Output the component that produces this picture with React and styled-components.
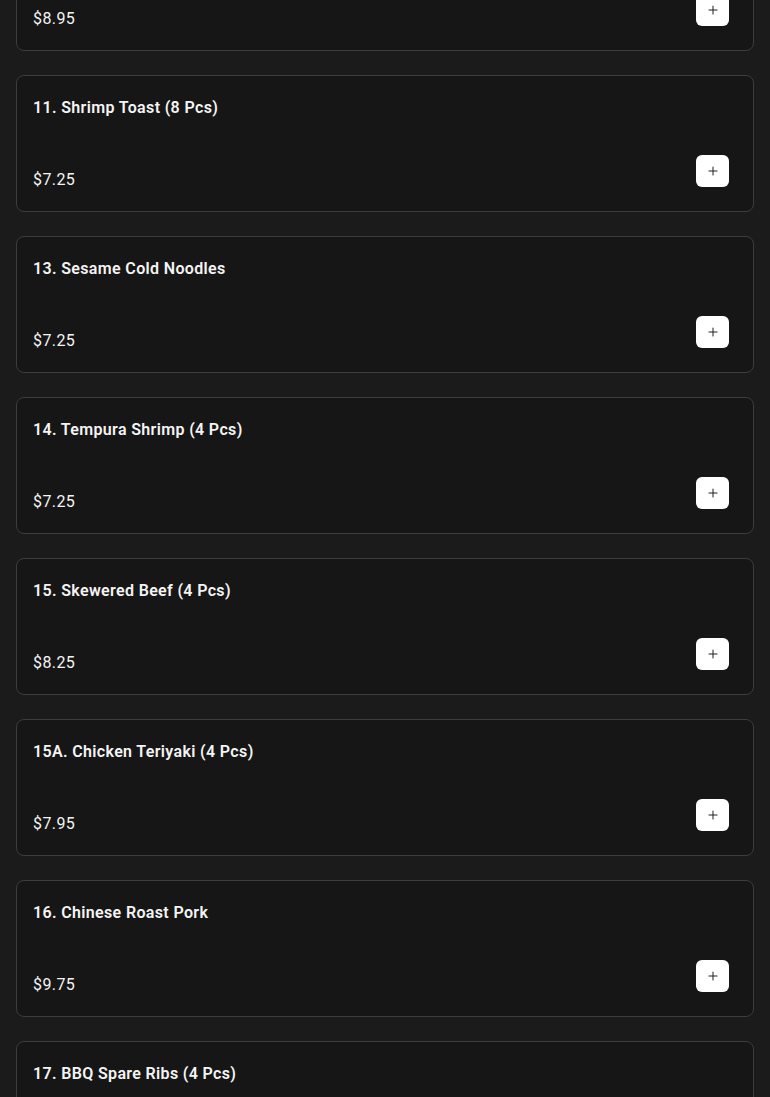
import styled, { createGlobalStyle } from "styled-components";
import { Plus } from "lucide-react";

const Global = createGlobalStyle`
  html, body {
    margin: 0;
    background: #1b1b1b;
    font-family: Roboto, "Liberation Sans", sans-serif;
    color: #f4f4f4;
  }
`;

const Page = styled.main`
  padding: 0 16px 40px;
  overflow: hidden;
`;

const List = styled.div`
  display: flex;
  flex-direction: column;
  gap: 24px;
  margin-top: -86px;
`;

const Card = styled.div`
  background: #161616;
  border: 1px solid #3d3d3d;
  border-radius: 8px;
  padding: 20px 16px 19px;
  display: flex;
  flex-direction: column;
`;

const Title = styled.h3`
  margin: 0;
  font-size: 16px;
  line-height: 24px;
  font-weight: 600;
  letter-spacing: 0.35px;
`;

const Footer = styled.div`
  margin-top: 35px;
  display: flex;
  justify-content: space-between;
  align-items: flex-end;
`;

const Price = styled.span`
  font-size: 16px;
  line-height: 24px;
  font-weight: 400;
  letter-spacing: 0.4px;
`;

const AddButton = styled.button`
  width: 33px;
  height: 32px;
  margin: 0 8px 5px 0;
  border: none;
  border-radius: 6px;
  background: #ffffff;
  color: #222;
  display: flex;
  align-items: center;
  justify-content: center;
  padding: 0;
  cursor: pointer;
`;

const items = [
  { name: "10. Fried Wonton (12 Pcs)", price: "$8.95" },
  { name: "11. Shrimp Toast (8 Pcs)", price: "$7.25" },
  { name: "13. Sesame Cold Noodles", price: "$7.25" },
  { name: "14. Tempura Shrimp (4 Pcs)", price: "$7.25" },
  { name: "15. Skewered Beef (4 Pcs)", price: "$8.25" },
  { name: "15A. Chicken Teriyaki (4 Pcs)", price: "$7.95" },
  { name: "16. Chinese Roast Pork", price: "$9.75" },
  { name: "17. BBQ Spare Ribs (4 Pcs)", price: "$9.95" },
];

export default function App() {
  return (
    <>
      <Global />
      <Page>
        <List>
          {items.map((item) => (
            <Card key={item.name}>
              <Title>{item.name}</Title>
              <Footer>
                <Price>{item.price}</Price>
                <AddButton aria-label={`Add ${item.name}`}>
                  <Plus size={14} strokeWidth={1.75} />
                </AddButton>
              </Footer>
            </Card>
          ))}
        </List>
      </Page>
    </>
  );
}
